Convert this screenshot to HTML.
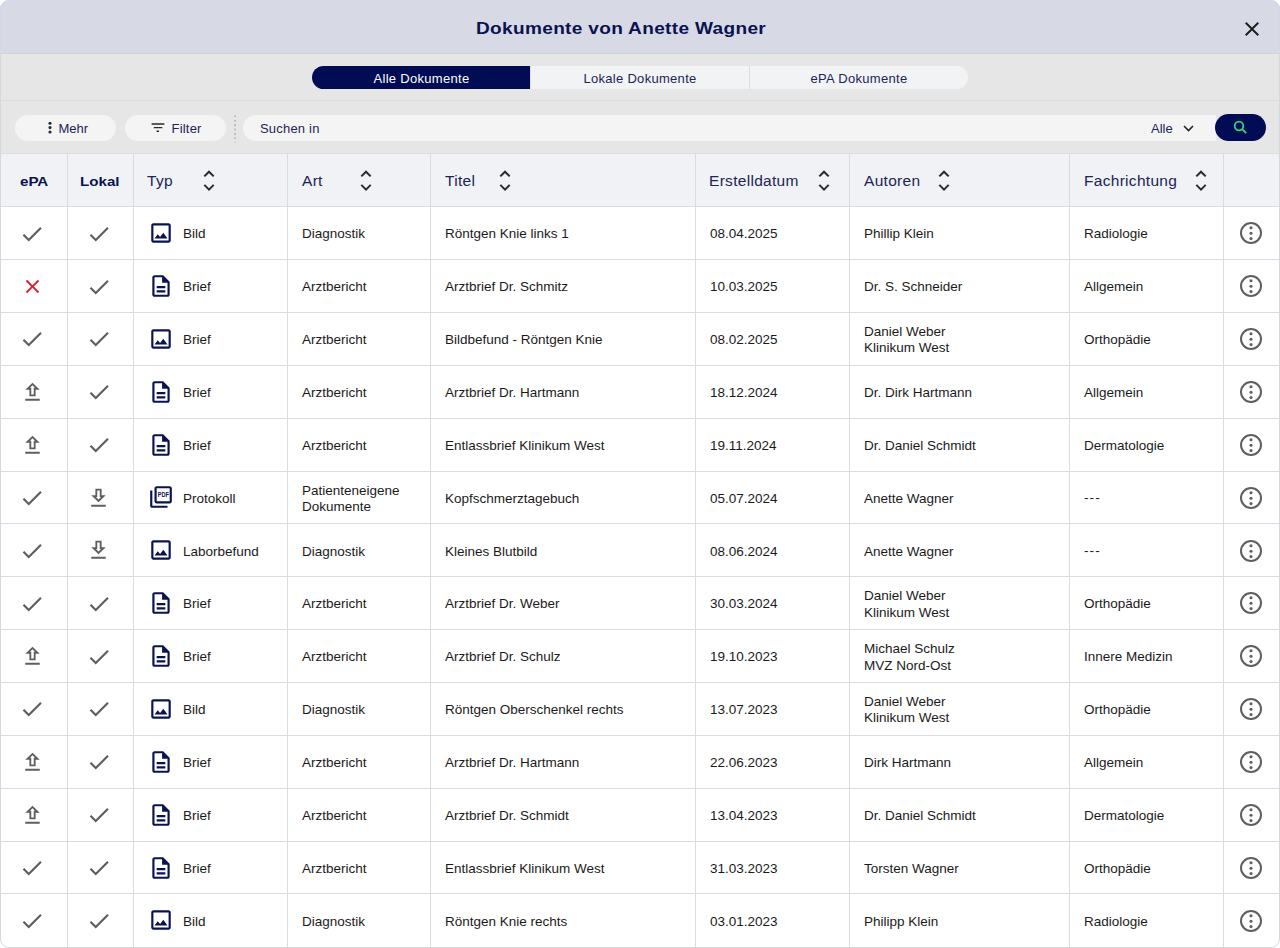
<!DOCTYPE html>
<html><head><meta charset="utf-8">
<style>
*{box-sizing:border-box;margin:0;padding:0}
html,body{width:1280px;height:948px;overflow:hidden;background:#fff;font-family:"Liberation Sans",sans-serif}
#dlg{position:absolute;left:0;top:0;width:1280px;height:948px;border-radius:9px;overflow:hidden;background:#fff}
#frame{position:absolute;left:0;top:0;width:1280px;height:948px;border:1px solid #d5d8e2;border-radius:9px;z-index:10}
#hdr{position:absolute;left:0;top:0;width:1280px;height:54px;background:#d7dae5;border-bottom:1px solid #cfd2dc}
#title{position:absolute;left:476px;top:19px;font-weight:bold;font-size:17px;letter-spacing:0.3px;color:#0a1250;line-height:20px;white-space:nowrap;transform-origin:0 0;transform:scaleX(1.12)}
#close{position:absolute;left:1239.8px;top:17px;width:24px;height:24px}
#tabs{position:absolute;left:0;top:54px;width:1280px;height:47px;background:#e6e6e6;border-bottom:1px solid #dadada}
#seg{position:absolute;left:312px;top:12px;width:656px;height:23px;border-radius:12px;background:#f2f3f5;overflow:hidden}
.sg{position:absolute;top:0;padding-top:1px;height:23px;width:219px;text-align:center;font-size:13px;letter-spacing:0.3px;line-height:23px;color:#1d2456}
.sg.a{background:#010c55;color:#fff}
#tool{position:absolute;left:0;top:101px;width:1280px;height:52px;background:#e6e6e6}
.btn{position:absolute;top:13.5px;height:26px;border-radius:13px;background:#f4f4f4;font-size:13px;color:#1d2456;line-height:26px}
#search{position:absolute;left:243px;top:13.5px;width:973px;height:26px;background:#f4f4f4;border-radius:13px 0 0 13px}
#sbtn{position:absolute;left:1215px;top:13px;width:51px;height:27px;border-radius:14px;background:#010c55}
#thead{position:absolute;left:0;top:153px;width:1280px;height:54px;background:#f0f2f6}
.hc{position:absolute;top:1px;height:53px;line-height:53px;font-size:15.5px;color:#1d2456;letter-spacing:0.3px}
.hb{font-weight:bold;font-size:13.5px;color:#0a1250;letter-spacing:0px;top:1.5px;transform-origin:0 0;transform:scaleX(1.12)}
.vl{position:absolute;top:153px;width:1px;height:795px;background:#d9dbe3}
.row{position:absolute;left:0;width:1280px;height:53.86px;border-top:1px solid #d9dbe3}
.c{position:absolute;top:1px;height:52.86px;display:flex;align-items:center}
.tx{font-size:13.5px;color:#1a1a1a;letter-spacing:0px;line-height:16.4px}
</style></head><body>
<div id="dlg">
<div id="hdr"><div id="title">Dokumente von Anette Wagner</div>
<svg id="close" viewBox="0 0 24 24"><path fill="#1e1e1e" d="M19 6.41L17.59 5 12 10.59 6.41 5 5 6.41 10.59 12 5 17.59 6.41 19 12 13.41 17.59 19 19 17.59 13.41 12z"/></svg>
</div>
<div id="tabs"><div id="seg">
<div class="sg a" style="left:0">Alle Dokumente</div>
<div class="sg" style="left:218px;border-left:1px solid #dcdde2">Lokale Dokumente</div>
<div class="sg" style="left:437px;border-left:1px solid #dcdde2">ePA Dokumente</div>
</div></div>
<div id="tool">
<div class="btn" style="left:14.5px;width:101px"><svg style="position:absolute;left:33.5px;top:6.5px" width="4" height="14" viewBox="0 0 4 14"><circle cx="2" cy="2.2" r="1.55" fill="#2a2a2a"/><circle cx="2" cy="6.6" r="1.55" fill="#2a2a2a"/><circle cx="2" cy="11" r="1.55" fill="#2a2a2a"/></svg><span style="position:absolute;left:44px;top:1px">Mehr</span></div>
<div class="btn" style="left:124.5px;width:101px"><svg style="position:absolute;left:26px;top:7.5px" width="14" height="10" viewBox="0 0 14 10"><path d="M0.6 2h12.8M2.8 5.6h8.5M5.6 9.2h2.4" stroke="#2a2a2a" stroke-width="1.4"/></svg><span style="position:absolute;left:47px;top:1px;letter-spacing:0.2px">Filter</span></div>
<svg style="position:absolute;left:233px;top:13px" width="4" height="29" viewBox="0 0 4 29"><path d="M2.1 1.5V28.5" stroke="#a5a5a5" stroke-width="1.4" stroke-dasharray="1.6 2.8"/></svg>
<div id="search"><span style="position:absolute;left:17px;top:1.5px;line-height:26px;font-size:13px;color:#1d2456;letter-spacing:0.2px">Suchen in</span>
<span style="position:absolute;left:908px;top:1.5px;line-height:26px;font-size:13px;color:#1d2456">Alle</span>
<svg style="position:absolute;left:940px;top:9px" width="11" height="8" viewBox="0 0 11 8"><path d="M1 2l4.5 4.5 4.5-4.5" fill="none" stroke="#222" stroke-width="1.6"/></svg>
</div>
<div id="sbtn"><svg style="position:absolute;left:17.5px;top:6px" width="15" height="15" viewBox="0 0 15 15"><circle cx="6" cy="6" r="4.3" fill="none" stroke="#34d27b" stroke-width="1.8"/><path d="M9.2 9.2l4 4" stroke="#34d27b" stroke-width="1.9"/></svg></div>
</div>
<div id="thead">
<div class="hc hb" style="left:20px">ePA</div>
<div class="hc hb" style="left:80px">Lokal</div>
<div class="hc" style="left:147px">Typ</div><svg style="position:absolute;left:202.8px;top:17px" width="12" height="22" viewBox="0 0 12 22"><path d="M1.3 6.4 L6 1.7 L10.7 6.4 M1.3 14.9 L6 19.6 L10.7 14.9" fill="none" stroke="#2b2b2b" stroke-width="2"/></svg>
<div class="hc" style="left:302px">Art</div><svg style="position:absolute;left:360.3px;top:17px" width="12" height="22" viewBox="0 0 12 22"><path d="M1.3 6.4 L6 1.7 L10.7 6.4 M1.3 14.9 L6 19.6 L10.7 14.9" fill="none" stroke="#2b2b2b" stroke-width="2"/></svg>
<div class="hc" style="left:445px">Titel</div><svg style="position:absolute;left:499.3px;top:17px" width="12" height="22" viewBox="0 0 12 22"><path d="M1.3 6.4 L6 1.7 L10.7 6.4 M1.3 14.9 L6 19.6 L10.7 14.9" fill="none" stroke="#2b2b2b" stroke-width="2"/></svg>
<div class="hc" style="left:709px">Erstelldatum</div><svg style="position:absolute;left:817.8px;top:17px" width="12" height="22" viewBox="0 0 12 22"><path d="M1.3 6.4 L6 1.7 L10.7 6.4 M1.3 14.9 L6 19.6 L10.7 14.9" fill="none" stroke="#2b2b2b" stroke-width="2"/></svg>
<div class="hc" style="left:864px">Autoren</div><svg style="position:absolute;left:937.8px;top:17px" width="12" height="22" viewBox="0 0 12 22"><path d="M1.3 6.4 L6 1.7 L10.7 6.4 M1.3 14.9 L6 19.6 L10.7 14.9" fill="none" stroke="#2b2b2b" stroke-width="2"/></svg>
<div class="hc" style="left:1084px">Fachrichtung</div><svg style="position:absolute;left:1194.8px;top:17px" width="12" height="22" viewBox="0 0 12 22"><path d="M1.3 6.4 L6 1.7 L10.7 6.4 M1.3 14.9 L6 19.6 L10.7 14.9" fill="none" stroke="#2b2b2b" stroke-width="2"/></svg>
</div>
<div style="position:absolute;left:0;top:153px;width:1280px;height:1px;background:#dcdde1"></div>
<div class="row" style="top:206.20px"><svg style="position:absolute;left:19.10px;top:13.50px" width="26" height="26" viewBox="0 0 24 24"><path fill="#5f5f5f" d="M9 16.17L4.83 12l-1.42 1.41L9 19 21 7l-1.41-1.41z"/></svg><svg style="position:absolute;left:85.90px;top:13.50px" width="26" height="26" viewBox="0 0 24 24"><path fill="#5f5f5f" d="M9 16.17L4.83 12l-1.42 1.41L9 19 21 7l-1.41-1.41z"/></svg><svg style="position:absolute;left:147.80px;top:12.95px" width="26" height="26" viewBox="0 0 24 24"><path fill="#0a1250" d="M19 5v14H5V5h14m0-2H5c-1.1 0-2 .9-2 2v14c0 1.1.9 2 2 2h14c1.1 0 2-.9 2-2V5c0-1.1-.9-2-2-2zm-4.86 8.86l-3 3.87L9 13.14 6 17h12l-3.86-5.14z"/></svg><div class="c" style="left:183px"><span class="tx">Bild</span></div><div class="c" style="left:302px"><span class="tx">Diagnostik</span></div><div class="c" style="left:445px"><span class="tx">Röntgen Knie links 1</span></div><div class="c" style="left:710px"><span class="tx">08.04.2025</span></div><div class="c" style="left:864px"><span class="tx">Phillip Klein</span></div><div class="c" style="left:1084px"><span class="tx">Radiologie</span></div><svg style="position:absolute;left:1239.45px;top:14.25px" width="24" height="24" viewBox="0 0 24 24"><circle cx="12" cy="12" r="10" fill="none" stroke="#5f5f5f" stroke-width="2"/><circle cx="12" cy="6.8" r="1.55" fill="#5f5f5f"/><circle cx="12" cy="12.2" r="1.55" fill="#5f5f5f"/><circle cx="12" cy="17.6" r="1.55" fill="#5f5f5f"/></svg></div><div class="row" style="top:259.06px"><svg style="position:absolute;left:20.96px;top:14.60px" width="23" height="23" viewBox="0 0 24 24"><path fill="#e1202d" d="M19 6.41L17.59 5 12 10.59 6.41 5 5 6.41 10.59 12 5 17.59 6.41 19 12 13.41 17.59 19 19 17.59 13.41 12z"/></svg><svg style="position:absolute;left:85.90px;top:13.50px" width="26" height="26" viewBox="0 0 24 24"><path fill="#5f5f5f" d="M9 16.17L4.83 12l-1.42 1.41L9 19 21 7l-1.41-1.41z"/></svg><svg style="position:absolute;left:147.80px;top:13.15px" width="26" height="26" viewBox="0 0 24 24"><path fill="#0a1250" d="M8 16h8v2H8zm0-4h8v2H8zm6-10H6c-1.1 0-2 .9-2 2v16c0 1.1.89 2 1.99 2H18c1.1 0 2-.9 2-2V8l-6-6zm4 18H6V4h7v5h5v11z"/></svg><div class="c" style="left:183px"><span class="tx">Brief</span></div><div class="c" style="left:302px"><span class="tx">Arztbericht</span></div><div class="c" style="left:445px"><span class="tx">Arztbrief Dr. Schmitz</span></div><div class="c" style="left:710px"><span class="tx">10.03.2025</span></div><div class="c" style="left:864px"><span class="tx">Dr. S. Schneider</span></div><div class="c" style="left:1084px"><span class="tx">Allgemein</span></div><svg style="position:absolute;left:1239.45px;top:14.25px" width="24" height="24" viewBox="0 0 24 24"><circle cx="12" cy="12" r="10" fill="none" stroke="#5f5f5f" stroke-width="2"/><circle cx="12" cy="6.8" r="1.55" fill="#5f5f5f"/><circle cx="12" cy="12.2" r="1.55" fill="#5f5f5f"/><circle cx="12" cy="17.6" r="1.55" fill="#5f5f5f"/></svg></div><div class="row" style="top:311.92px"><svg style="position:absolute;left:19.10px;top:13.50px" width="26" height="26" viewBox="0 0 24 24"><path fill="#5f5f5f" d="M9 16.17L4.83 12l-1.42 1.41L9 19 21 7l-1.41-1.41z"/></svg><svg style="position:absolute;left:85.90px;top:13.50px" width="26" height="26" viewBox="0 0 24 24"><path fill="#5f5f5f" d="M9 16.17L4.83 12l-1.42 1.41L9 19 21 7l-1.41-1.41z"/></svg><svg style="position:absolute;left:147.80px;top:12.95px" width="26" height="26" viewBox="0 0 24 24"><path fill="#0a1250" d="M19 5v14H5V5h14m0-2H5c-1.1 0-2 .9-2 2v14c0 1.1.9 2 2 2h14c1.1 0 2-.9 2-2V5c0-1.1-.9-2-2-2zm-4.86 8.86l-3 3.87L9 13.14 6 17h12l-3.86-5.14z"/></svg><div class="c" style="left:183px"><span class="tx">Brief</span></div><div class="c" style="left:302px"><span class="tx">Arztbericht</span></div><div class="c" style="left:445px"><span class="tx">Bildbefund - Röntgen Knie</span></div><div class="c" style="left:710px"><span class="tx">08.02.2025</span></div><div class="c" style="left:864px"><span class="tx">Daniel Weber<br>Klinikum West</span></div><div class="c" style="left:1084px"><span class="tx">Orthopädie</span></div><svg style="position:absolute;left:1239.45px;top:14.25px" width="24" height="24" viewBox="0 0 24 24"><circle cx="12" cy="12" r="10" fill="none" stroke="#5f5f5f" stroke-width="2"/><circle cx="12" cy="6.8" r="1.55" fill="#5f5f5f"/><circle cx="12" cy="12.2" r="1.55" fill="#5f5f5f"/><circle cx="12" cy="17.6" r="1.55" fill="#5f5f5f"/></svg></div><div class="row" style="top:364.78px"><svg style="position:absolute;left:17.95px;top:9.00px" width="30" height="30" viewBox="0 0 30 30"><path fill="#5f5f5f" fill-rule="evenodd" d="M14.5 7.65L21.75 14.75H17.6V21.25H11.4V14.75H7.25Z M14.5 10.35L17.0 12.85H15.75V19.4H13.25V12.85H12.0Z M7.25 23.85H21.75V25.85H7.25Z"/></svg><svg style="position:absolute;left:85.90px;top:13.50px" width="26" height="26" viewBox="0 0 24 24"><path fill="#5f5f5f" d="M9 16.17L4.83 12l-1.42 1.41L9 19 21 7l-1.41-1.41z"/></svg><svg style="position:absolute;left:147.80px;top:13.15px" width="26" height="26" viewBox="0 0 24 24"><path fill="#0a1250" d="M8 16h8v2H8zm0-4h8v2H8zm6-10H6c-1.1 0-2 .9-2 2v16c0 1.1.89 2 1.99 2H18c1.1 0 2-.9 2-2V8l-6-6zm4 18H6V4h7v5h5v11z"/></svg><div class="c" style="left:183px"><span class="tx">Brief</span></div><div class="c" style="left:302px"><span class="tx">Arztbericht</span></div><div class="c" style="left:445px"><span class="tx">Arztbrief Dr. Hartmann</span></div><div class="c" style="left:710px"><span class="tx">18.12.2024</span></div><div class="c" style="left:864px"><span class="tx">Dr. Dirk Hartmann</span></div><div class="c" style="left:1084px"><span class="tx">Allgemein</span></div><svg style="position:absolute;left:1239.45px;top:14.25px" width="24" height="24" viewBox="0 0 24 24"><circle cx="12" cy="12" r="10" fill="none" stroke="#5f5f5f" stroke-width="2"/><circle cx="12" cy="6.8" r="1.55" fill="#5f5f5f"/><circle cx="12" cy="12.2" r="1.55" fill="#5f5f5f"/><circle cx="12" cy="17.6" r="1.55" fill="#5f5f5f"/></svg></div><div class="row" style="top:417.64px"><svg style="position:absolute;left:17.95px;top:9.00px" width="30" height="30" viewBox="0 0 30 30"><path fill="#5f5f5f" fill-rule="evenodd" d="M14.5 7.65L21.75 14.75H17.6V21.25H11.4V14.75H7.25Z M14.5 10.35L17.0 12.85H15.75V19.4H13.25V12.85H12.0Z M7.25 23.85H21.75V25.85H7.25Z"/></svg><svg style="position:absolute;left:85.90px;top:13.50px" width="26" height="26" viewBox="0 0 24 24"><path fill="#5f5f5f" d="M9 16.17L4.83 12l-1.42 1.41L9 19 21 7l-1.41-1.41z"/></svg><svg style="position:absolute;left:147.80px;top:13.15px" width="26" height="26" viewBox="0 0 24 24"><path fill="#0a1250" d="M8 16h8v2H8zm0-4h8v2H8zm6-10H6c-1.1 0-2 .9-2 2v16c0 1.1.89 2 1.99 2H18c1.1 0 2-.9 2-2V8l-6-6zm4 18H6V4h7v5h5v11z"/></svg><div class="c" style="left:183px"><span class="tx">Brief</span></div><div class="c" style="left:302px"><span class="tx">Arztbericht</span></div><div class="c" style="left:445px"><span class="tx">Entlassbrief Klinikum West</span></div><div class="c" style="left:710px"><span class="tx">19.11.2024</span></div><div class="c" style="left:864px"><span class="tx">Dr. Daniel Schmidt</span></div><div class="c" style="left:1084px"><span class="tx">Dermatologie</span></div><svg style="position:absolute;left:1239.45px;top:14.25px" width="24" height="24" viewBox="0 0 24 24"><circle cx="12" cy="12" r="10" fill="none" stroke="#5f5f5f" stroke-width="2"/><circle cx="12" cy="6.8" r="1.55" fill="#5f5f5f"/><circle cx="12" cy="12.2" r="1.55" fill="#5f5f5f"/><circle cx="12" cy="17.6" r="1.55" fill="#5f5f5f"/></svg></div><div class="row" style="top:470.50px"><svg style="position:absolute;left:19.10px;top:13.50px" width="26" height="26" viewBox="0 0 24 24"><path fill="#5f5f5f" d="M9 16.17L4.83 12l-1.42 1.41L9 19 21 7l-1.41-1.41z"/></svg><svg style="position:absolute;left:84.05px;top:9.00px" width="30" height="30" viewBox="0 0 30 30"><path fill="#5f5f5f" fill-rule="evenodd" d="M14.5 21.25L21.75 14.15H17.6V7.65H11.4V14.15H7.25Z M14.5 18.55L17.0 16.05H15.75V9.5H13.25V16.05H12.0Z M7.25 23.85H21.75V25.85H7.25Z"/></svg><svg style="position:absolute;left:147.80px;top:12.60px" width="26" height="26" viewBox="0 0 24 24"><path fill="#0a1250" d="M20 2H8c-1.1 0-2 .9-2 2v12c0 1.1.9 2 2 2h12c1.1 0 2-.9 2-2V4c0-1.1-.9-2-2-2zm0 14H8V4h12v12zM4 6H2v14c0 1.1.9 2 2 2h14v-2H4V6z"/><text x="14.1" y="12.3" text-anchor="middle" font-family="Liberation Sans" font-weight="bold" font-size="7" fill="#0a1250" textLength="10.4" lengthAdjust="spacingAndGlyphs">PDF</text></svg><div class="c" style="left:183px"><span class="tx">Protokoll</span></div><div class="c" style="left:302px"><span class="tx">Patienteneigene<br>Dokumente</span></div><div class="c" style="left:445px"><span class="tx">Kopfschmerztagebuch</span></div><div class="c" style="left:710px"><span class="tx">05.07.2024</span></div><div class="c" style="left:864px"><span class="tx">Anette Wagner</span></div><div class="c" style="left:1084px"><span class="tx"><span style="letter-spacing:1.1px;position:relative;top:-1px">---</span></span></div><svg style="position:absolute;left:1239.45px;top:14.25px" width="24" height="24" viewBox="0 0 24 24"><circle cx="12" cy="12" r="10" fill="none" stroke="#5f5f5f" stroke-width="2"/><circle cx="12" cy="6.8" r="1.55" fill="#5f5f5f"/><circle cx="12" cy="12.2" r="1.55" fill="#5f5f5f"/><circle cx="12" cy="17.6" r="1.55" fill="#5f5f5f"/></svg></div><div class="row" style="top:523.36px"><svg style="position:absolute;left:19.10px;top:13.50px" width="26" height="26" viewBox="0 0 24 24"><path fill="#5f5f5f" d="M9 16.17L4.83 12l-1.42 1.41L9 19 21 7l-1.41-1.41z"/></svg><svg style="position:absolute;left:84.05px;top:9.00px" width="30" height="30" viewBox="0 0 30 30"><path fill="#5f5f5f" fill-rule="evenodd" d="M14.5 21.25L21.75 14.15H17.6V7.65H11.4V14.15H7.25Z M14.5 18.55L17.0 16.05H15.75V9.5H13.25V16.05H12.0Z M7.25 23.85H21.75V25.85H7.25Z"/></svg><svg style="position:absolute;left:147.80px;top:12.95px" width="26" height="26" viewBox="0 0 24 24"><path fill="#0a1250" d="M19 5v14H5V5h14m0-2H5c-1.1 0-2 .9-2 2v14c0 1.1.9 2 2 2h14c1.1 0 2-.9 2-2V5c0-1.1-.9-2-2-2zm-4.86 8.86l-3 3.87L9 13.14 6 17h12l-3.86-5.14z"/></svg><div class="c" style="left:183px"><span class="tx">Laborbefund</span></div><div class="c" style="left:302px"><span class="tx">Diagnostik</span></div><div class="c" style="left:445px"><span class="tx">Kleines Blutbild</span></div><div class="c" style="left:710px"><span class="tx">08.06.2024</span></div><div class="c" style="left:864px"><span class="tx">Anette Wagner</span></div><div class="c" style="left:1084px"><span class="tx"><span style="letter-spacing:1.1px;position:relative;top:-1px">---</span></span></div><svg style="position:absolute;left:1239.45px;top:14.25px" width="24" height="24" viewBox="0 0 24 24"><circle cx="12" cy="12" r="10" fill="none" stroke="#5f5f5f" stroke-width="2"/><circle cx="12" cy="6.8" r="1.55" fill="#5f5f5f"/><circle cx="12" cy="12.2" r="1.55" fill="#5f5f5f"/><circle cx="12" cy="17.6" r="1.55" fill="#5f5f5f"/></svg></div><div class="row" style="top:576.22px"><svg style="position:absolute;left:19.10px;top:13.50px" width="26" height="26" viewBox="0 0 24 24"><path fill="#5f5f5f" d="M9 16.17L4.83 12l-1.42 1.41L9 19 21 7l-1.41-1.41z"/></svg><svg style="position:absolute;left:85.90px;top:13.50px" width="26" height="26" viewBox="0 0 24 24"><path fill="#5f5f5f" d="M9 16.17L4.83 12l-1.42 1.41L9 19 21 7l-1.41-1.41z"/></svg><svg style="position:absolute;left:147.80px;top:13.15px" width="26" height="26" viewBox="0 0 24 24"><path fill="#0a1250" d="M8 16h8v2H8zm0-4h8v2H8zm6-10H6c-1.1 0-2 .9-2 2v16c0 1.1.89 2 1.99 2H18c1.1 0 2-.9 2-2V8l-6-6zm4 18H6V4h7v5h5v11z"/></svg><div class="c" style="left:183px"><span class="tx">Brief</span></div><div class="c" style="left:302px"><span class="tx">Arztbericht</span></div><div class="c" style="left:445px"><span class="tx">Arztbrief Dr. Weber</span></div><div class="c" style="left:710px"><span class="tx">30.03.2024</span></div><div class="c" style="left:864px"><span class="tx">Daniel Weber<br>Klinikum West</span></div><div class="c" style="left:1084px"><span class="tx">Orthopädie</span></div><svg style="position:absolute;left:1239.45px;top:14.25px" width="24" height="24" viewBox="0 0 24 24"><circle cx="12" cy="12" r="10" fill="none" stroke="#5f5f5f" stroke-width="2"/><circle cx="12" cy="6.8" r="1.55" fill="#5f5f5f"/><circle cx="12" cy="12.2" r="1.55" fill="#5f5f5f"/><circle cx="12" cy="17.6" r="1.55" fill="#5f5f5f"/></svg></div><div class="row" style="top:629.08px"><svg style="position:absolute;left:17.95px;top:9.00px" width="30" height="30" viewBox="0 0 30 30"><path fill="#5f5f5f" fill-rule="evenodd" d="M14.5 7.65L21.75 14.75H17.6V21.25H11.4V14.75H7.25Z M14.5 10.35L17.0 12.85H15.75V19.4H13.25V12.85H12.0Z M7.25 23.85H21.75V25.85H7.25Z"/></svg><svg style="position:absolute;left:85.90px;top:13.50px" width="26" height="26" viewBox="0 0 24 24"><path fill="#5f5f5f" d="M9 16.17L4.83 12l-1.42 1.41L9 19 21 7l-1.41-1.41z"/></svg><svg style="position:absolute;left:147.80px;top:13.15px" width="26" height="26" viewBox="0 0 24 24"><path fill="#0a1250" d="M8 16h8v2H8zm0-4h8v2H8zm6-10H6c-1.1 0-2 .9-2 2v16c0 1.1.89 2 1.99 2H18c1.1 0 2-.9 2-2V8l-6-6zm4 18H6V4h7v5h5v11z"/></svg><div class="c" style="left:183px"><span class="tx">Brief</span></div><div class="c" style="left:302px"><span class="tx">Arztbericht</span></div><div class="c" style="left:445px"><span class="tx">Arztbrief Dr. Schulz</span></div><div class="c" style="left:710px"><span class="tx">19.10.2023</span></div><div class="c" style="left:864px"><span class="tx">Michael Schulz<br>MVZ Nord-Ost</span></div><div class="c" style="left:1084px"><span class="tx">Innere Medizin</span></div><svg style="position:absolute;left:1239.45px;top:14.25px" width="24" height="24" viewBox="0 0 24 24"><circle cx="12" cy="12" r="10" fill="none" stroke="#5f5f5f" stroke-width="2"/><circle cx="12" cy="6.8" r="1.55" fill="#5f5f5f"/><circle cx="12" cy="12.2" r="1.55" fill="#5f5f5f"/><circle cx="12" cy="17.6" r="1.55" fill="#5f5f5f"/></svg></div><div class="row" style="top:681.94px"><svg style="position:absolute;left:19.10px;top:13.50px" width="26" height="26" viewBox="0 0 24 24"><path fill="#5f5f5f" d="M9 16.17L4.83 12l-1.42 1.41L9 19 21 7l-1.41-1.41z"/></svg><svg style="position:absolute;left:85.90px;top:13.50px" width="26" height="26" viewBox="0 0 24 24"><path fill="#5f5f5f" d="M9 16.17L4.83 12l-1.42 1.41L9 19 21 7l-1.41-1.41z"/></svg><svg style="position:absolute;left:147.80px;top:12.95px" width="26" height="26" viewBox="0 0 24 24"><path fill="#0a1250" d="M19 5v14H5V5h14m0-2H5c-1.1 0-2 .9-2 2v14c0 1.1.9 2 2 2h14c1.1 0 2-.9 2-2V5c0-1.1-.9-2-2-2zm-4.86 8.86l-3 3.87L9 13.14 6 17h12l-3.86-5.14z"/></svg><div class="c" style="left:183px"><span class="tx">Bild</span></div><div class="c" style="left:302px"><span class="tx">Diagnostik</span></div><div class="c" style="left:445px"><span class="tx">Röntgen Oberschenkel rechts</span></div><div class="c" style="left:710px"><span class="tx">13.07.2023</span></div><div class="c" style="left:864px"><span class="tx">Daniel Weber<br>Klinikum West</span></div><div class="c" style="left:1084px"><span class="tx">Orthopädie</span></div><svg style="position:absolute;left:1239.45px;top:14.25px" width="24" height="24" viewBox="0 0 24 24"><circle cx="12" cy="12" r="10" fill="none" stroke="#5f5f5f" stroke-width="2"/><circle cx="12" cy="6.8" r="1.55" fill="#5f5f5f"/><circle cx="12" cy="12.2" r="1.55" fill="#5f5f5f"/><circle cx="12" cy="17.6" r="1.55" fill="#5f5f5f"/></svg></div><div class="row" style="top:734.80px"><svg style="position:absolute;left:17.95px;top:9.00px" width="30" height="30" viewBox="0 0 30 30"><path fill="#5f5f5f" fill-rule="evenodd" d="M14.5 7.65L21.75 14.75H17.6V21.25H11.4V14.75H7.25Z M14.5 10.35L17.0 12.85H15.75V19.4H13.25V12.85H12.0Z M7.25 23.85H21.75V25.85H7.25Z"/></svg><svg style="position:absolute;left:85.90px;top:13.50px" width="26" height="26" viewBox="0 0 24 24"><path fill="#5f5f5f" d="M9 16.17L4.83 12l-1.42 1.41L9 19 21 7l-1.41-1.41z"/></svg><svg style="position:absolute;left:147.80px;top:13.15px" width="26" height="26" viewBox="0 0 24 24"><path fill="#0a1250" d="M8 16h8v2H8zm0-4h8v2H8zm6-10H6c-1.1 0-2 .9-2 2v16c0 1.1.89 2 1.99 2H18c1.1 0 2-.9 2-2V8l-6-6zm4 18H6V4h7v5h5v11z"/></svg><div class="c" style="left:183px"><span class="tx">Brief</span></div><div class="c" style="left:302px"><span class="tx">Arztbericht</span></div><div class="c" style="left:445px"><span class="tx">Arztbrief Dr. Hartmann</span></div><div class="c" style="left:710px"><span class="tx">22.06.2023</span></div><div class="c" style="left:864px"><span class="tx">Dirk Hartmann</span></div><div class="c" style="left:1084px"><span class="tx">Allgemein</span></div><svg style="position:absolute;left:1239.45px;top:14.25px" width="24" height="24" viewBox="0 0 24 24"><circle cx="12" cy="12" r="10" fill="none" stroke="#5f5f5f" stroke-width="2"/><circle cx="12" cy="6.8" r="1.55" fill="#5f5f5f"/><circle cx="12" cy="12.2" r="1.55" fill="#5f5f5f"/><circle cx="12" cy="17.6" r="1.55" fill="#5f5f5f"/></svg></div><div class="row" style="top:787.66px"><svg style="position:absolute;left:17.95px;top:9.00px" width="30" height="30" viewBox="0 0 30 30"><path fill="#5f5f5f" fill-rule="evenodd" d="M14.5 7.65L21.75 14.75H17.6V21.25H11.4V14.75H7.25Z M14.5 10.35L17.0 12.85H15.75V19.4H13.25V12.85H12.0Z M7.25 23.85H21.75V25.85H7.25Z"/></svg><svg style="position:absolute;left:85.90px;top:13.50px" width="26" height="26" viewBox="0 0 24 24"><path fill="#5f5f5f" d="M9 16.17L4.83 12l-1.42 1.41L9 19 21 7l-1.41-1.41z"/></svg><svg style="position:absolute;left:147.80px;top:13.15px" width="26" height="26" viewBox="0 0 24 24"><path fill="#0a1250" d="M8 16h8v2H8zm0-4h8v2H8zm6-10H6c-1.1 0-2 .9-2 2v16c0 1.1.89 2 1.99 2H18c1.1 0 2-.9 2-2V8l-6-6zm4 18H6V4h7v5h5v11z"/></svg><div class="c" style="left:183px"><span class="tx">Brief</span></div><div class="c" style="left:302px"><span class="tx">Arztbericht</span></div><div class="c" style="left:445px"><span class="tx">Arztbrief Dr. Schmidt</span></div><div class="c" style="left:710px"><span class="tx">13.04.2023</span></div><div class="c" style="left:864px"><span class="tx">Dr. Daniel Schmidt</span></div><div class="c" style="left:1084px"><span class="tx">Dermatologie</span></div><svg style="position:absolute;left:1239.45px;top:14.25px" width="24" height="24" viewBox="0 0 24 24"><circle cx="12" cy="12" r="10" fill="none" stroke="#5f5f5f" stroke-width="2"/><circle cx="12" cy="6.8" r="1.55" fill="#5f5f5f"/><circle cx="12" cy="12.2" r="1.55" fill="#5f5f5f"/><circle cx="12" cy="17.6" r="1.55" fill="#5f5f5f"/></svg></div><div class="row" style="top:840.52px"><svg style="position:absolute;left:19.10px;top:13.50px" width="26" height="26" viewBox="0 0 24 24"><path fill="#5f5f5f" d="M9 16.17L4.83 12l-1.42 1.41L9 19 21 7l-1.41-1.41z"/></svg><svg style="position:absolute;left:85.90px;top:13.50px" width="26" height="26" viewBox="0 0 24 24"><path fill="#5f5f5f" d="M9 16.17L4.83 12l-1.42 1.41L9 19 21 7l-1.41-1.41z"/></svg><svg style="position:absolute;left:147.80px;top:13.15px" width="26" height="26" viewBox="0 0 24 24"><path fill="#0a1250" d="M8 16h8v2H8zm0-4h8v2H8zm6-10H6c-1.1 0-2 .9-2 2v16c0 1.1.89 2 1.99 2H18c1.1 0 2-.9 2-2V8l-6-6zm4 18H6V4h7v5h5v11z"/></svg><div class="c" style="left:183px"><span class="tx">Brief</span></div><div class="c" style="left:302px"><span class="tx">Arztbericht</span></div><div class="c" style="left:445px"><span class="tx">Entlassbrief Klinikum West</span></div><div class="c" style="left:710px"><span class="tx">31.03.2023</span></div><div class="c" style="left:864px"><span class="tx">Torsten Wagner</span></div><div class="c" style="left:1084px"><span class="tx">Orthopädie</span></div><svg style="position:absolute;left:1239.45px;top:14.25px" width="24" height="24" viewBox="0 0 24 24"><circle cx="12" cy="12" r="10" fill="none" stroke="#5f5f5f" stroke-width="2"/><circle cx="12" cy="6.8" r="1.55" fill="#5f5f5f"/><circle cx="12" cy="12.2" r="1.55" fill="#5f5f5f"/><circle cx="12" cy="17.6" r="1.55" fill="#5f5f5f"/></svg></div><div class="row" style="top:893.38px"><svg style="position:absolute;left:19.10px;top:13.50px" width="26" height="26" viewBox="0 0 24 24"><path fill="#5f5f5f" d="M9 16.17L4.83 12l-1.42 1.41L9 19 21 7l-1.41-1.41z"/></svg><svg style="position:absolute;left:85.90px;top:13.50px" width="26" height="26" viewBox="0 0 24 24"><path fill="#5f5f5f" d="M9 16.17L4.83 12l-1.42 1.41L9 19 21 7l-1.41-1.41z"/></svg><svg style="position:absolute;left:147.80px;top:12.95px" width="26" height="26" viewBox="0 0 24 24"><path fill="#0a1250" d="M19 5v14H5V5h14m0-2H5c-1.1 0-2 .9-2 2v14c0 1.1.9 2 2 2h14c1.1 0 2-.9 2-2V5c0-1.1-.9-2-2-2zm-4.86 8.86l-3 3.87L9 13.14 6 17h12l-3.86-5.14z"/></svg><div class="c" style="left:183px"><span class="tx">Bild</span></div><div class="c" style="left:302px"><span class="tx">Diagnostik</span></div><div class="c" style="left:445px"><span class="tx">Röntgen Knie rechts</span></div><div class="c" style="left:710px"><span class="tx">03.01.2023</span></div><div class="c" style="left:864px"><span class="tx">Philipp Klein</span></div><div class="c" style="left:1084px"><span class="tx">Radiologie</span></div><svg style="position:absolute;left:1239.45px;top:14.25px" width="24" height="24" viewBox="0 0 24 24"><circle cx="12" cy="12" r="10" fill="none" stroke="#5f5f5f" stroke-width="2"/><circle cx="12" cy="6.8" r="1.55" fill="#5f5f5f"/><circle cx="12" cy="12.2" r="1.55" fill="#5f5f5f"/><circle cx="12" cy="17.6" r="1.55" fill="#5f5f5f"/></svg></div>
<div class="vl" style="left:67px"></div><div class="vl" style="left:133px"></div><div class="vl" style="left:287px"></div><div class="vl" style="left:430px"></div><div class="vl" style="left:695px"></div><div class="vl" style="left:849px"></div><div class="vl" style="left:1069px"></div><div class="vl" style="left:1223px"></div>
</div>
<div id="frame"></div>
</body></html>
